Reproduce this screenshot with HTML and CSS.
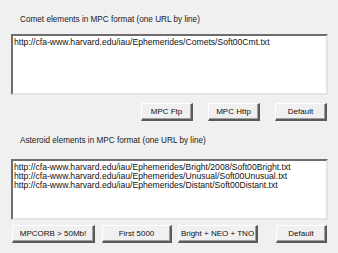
FILE: index.html
```html
<!DOCTYPE html>
<html lang="en">
<head>
    <meta charset="UTF-8">
    <title>MPC elements</title>
    <link rel="stylesheet" href="styles.css">
</head>
<body>
    <div class="panel">
        <div class="group-label">Comet elements in MPC format (one URL by line)</div>
        <textarea class="url-box" readonly>http://cfa-www.harvard.edu/iau/Ephemerides/Comets/Soft00Cmt.txt</textarea>
        <div class="button-row right">
            <button class="btn">MPC Ftp</button>
            <button class="btn">MPC Http</button>
            <button class="btn">Default</button>
        </div>

        <div class="group-label second">Asteroid elements in MPC format (one URL by line)</div>
        <textarea class="url-box second" readonly>http://cfa-www.harvard.edu/iau/Ephemerides/Bright/2008/Soft00Bright.txt
http://cfa-www.harvard.edu/iau/Ephemerides/Unusual/Soft00Unusual.txt
http://cfa-www.harvard.edu/iau/Ephemerides/Distant/Soft00Distant.txt</textarea>
        <div class="button-row bottom">
            <button class="btn mpcorb">MPCORB &gt; 50Mb!</button>
            <button class="btn first">First 5000</button>
            <button class="btn bright">Bright + NEO + TNO</button>
            <button class="btn default-last">Default</button>
        </div>
    </div>
</body>
</html>
```

FILE: styles.css
```css
body {
    margin: 0;
    background-color: #f0f0f0;
    font-family: "Liberation Sans", Arial, sans-serif;
    color: #000;
}

.panel {
    padding: 15px 10px 0 11px;
}

.group-label {
    font-size: 8.2px;
    line-height: 10px;
    height: 10px;
    padding-left: 9px;
    color: #1a1a1a;
}

.group-label.second {
    margin-top: 15px;
}

/* sunken edit boxes */
.url-box {
    display: block;
    box-sizing: border-box;
    width: 317px;
    height: 61px;
    margin: 9px 0 0 0;
    padding: 2px 1px 0 1px;
    font-family: "Liberation Sans", Arial, sans-serif;
    font-size: 8.6px;
    line-height: 9px;
    color: #111;
    background-color: #fff;
    border-style: solid;
    border-width: 2px;
    border-color: #6d6d6d #e3e3e3 #e3e3e3 #6d6d6d;
    resize: none;
    outline: none;
    overflow: hidden;
    white-space: pre;
}

.url-box.second {
    margin-top: 13px;
}

.button-row {
    display: flex;
}

.button-row.right {
    justify-content: flex-end;
    gap: 15px;
    margin-top: 8px;
    padding-right: 1px;
}

.button-row.bottom {
    margin-top: 5px;
    padding-left: 1px;
}

/* raised buttons */
.btn {
    box-sizing: border-box;
    width: 52px;
    height: 18px;
    padding: 0;
    font-family: "Liberation Sans", Arial, sans-serif;
    font-size: 8px;
    color: #111;
    background-color: #f0f0f0;
    border-style: solid;
    border-width: 1px 2px 2px 1px;
    border-color: #fff #5a5a5a #5a5a5a #fff;
    box-shadow: inset -1px -1px 0 #a0a0a0;
}

.btn.mpcorb {
    width: 83px;
}

.btn.first {
    width: 70px;
    margin-left: 7px;
}

.btn.bright {
    width: 80px;
    margin-left: 6px;
}

.btn.default-last {
    width: 51px;
    margin-left: 18px;
}
```
